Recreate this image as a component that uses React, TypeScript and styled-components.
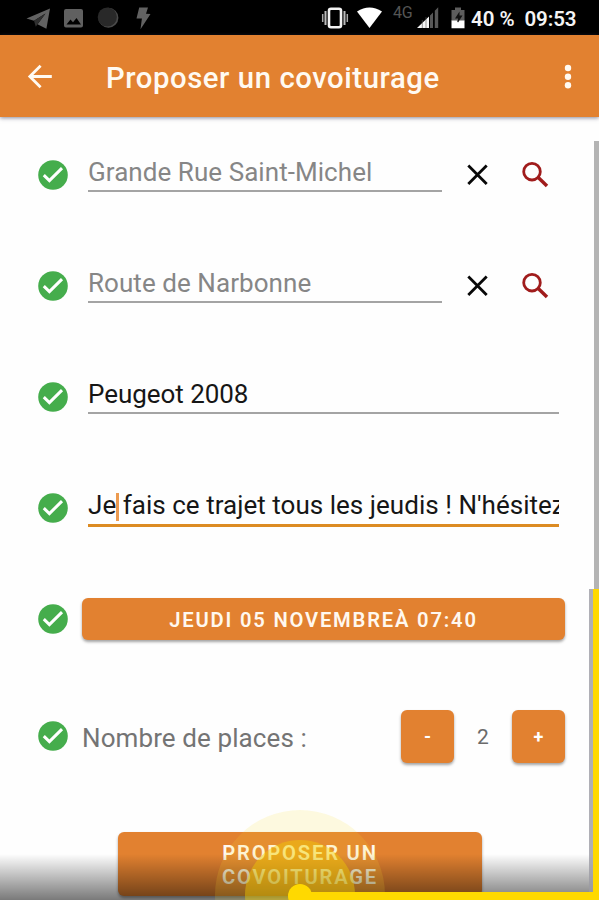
import React from "react";
import styled, { createGlobalStyle } from "styled-components";

const ORANGE = "#e28130";
const YELLOW = "#ffd900";

const GlobalStyle = createGlobalStyle`
  * { box-sizing: border-box; }
  body { margin: 0; background: #fff; font-family: Roboto, sans-serif; }
  button { border: 0; padding: 0; margin: 0; background: none; font-family: inherit; }
`;

const Screen = styled.div`
  position: relative;
  width: 599px;
  height: 900px;
  overflow: hidden;
  background: #fefefe;
  display: flex;
  flex-direction: column;
`;

const StatusBar = styled.header`
  flex: none;
  height: 35px;
  background: #000;
  color: #f4f4f4;
`;

const StatusIcons = styled.svg`
  display: block;
  width: 599px;
  height: 35px;
`;

const AppBar = styled.nav`
  flex: none;
  height: 82px;
  padding: 3px 16px 0 24px;
  display: flex;
  align-items: center;
  background: ${ORANGE};
  box-shadow: 0 1px 4px rgba(60, 60, 90, 0.6);
  z-index: 1;
`;

const Title = styled.h1`
  margin: 0 0 0 50px;
  flex: 1;
  color: #fffaf2;
  font-size: 29.3px;
  font-weight: 500;
  line-height: 36px;
  letter-spacing: 0.56px;
  white-space: nowrap;
`;

const IconButton = styled.button<{ $size: number }>`
  flex: none;
  width: ${(p) => p.$size}px;
  height: ${(p) => p.$size}px;
  svg { display: block; width: 100%; height: 100%; }
`;

const Form = styled.main`
  flex: none;
  display: flex;
  flex-direction: column;
  padding: 2px 34px 0 37px;
`;

const Row = styled.div<{ $height?: number; $gap?: number }>`
  height: ${(p) => p.$height ?? 111.2}px;
  display: flex;
  align-items: center;
  gap: ${(p) => p.$gap ?? 19}px;
`;

const CheckIcon = styled.svg`
  flex: none;
  width: 32px;
  height: 32px;
`;

const Field = styled.div<{ $width: number; $focus?: boolean; $muted?: boolean; $tracking: number }>`
  position: relative;
  flex: none;
  width: ${(p) => p.$width}px;
  height: ${(p) => (p.$focus ? 43 : 42)}px;
  margin-top: ${(p) => (p.$focus ? -5 : -7)}px;
  overflow: hidden;
  white-space: nowrap;
  font-size: 26px;
  line-height: ${(p) => (p.$focus ? 43 : 45)}px;
  letter-spacing: ${(p) => p.$tracking}px;
  color: ${(p) => (p.$muted ? "#868686" : "#161616")};
  box-shadow: inset 0 ${(p) => (p.$focus ? "-3px" : "-2px")} 0 ${(p) => (p.$focus ? "#dc8b22" : "#a4a4a4")};
`;

const Caret = styled.span`
  position: absolute;
  left: 27.5px;
  top: 9px;
  width: 3px;
  height: 28px;
  background: #ec9a50;
`;

const FieldActions = styled.div`
  display: flex;
  align-items: center;
  gap: 24px;
`;

const FilledButton = styled.button<{ $width: number; $height: number; $size?: number; $tracking?: number }>`
  flex: none;
  width: ${(p) => p.$width}px;
  height: ${(p) => p.$height}px;
  padding-top: 2px;
  border-radius: 6px;
  background: ${ORANGE};
  color: #fff8ef;
  box-shadow: 0 2px 3px rgba(0, 0, 0, 0.36);
  font-size: ${(p) => p.$size ?? 20.2}px;
  font-weight: 600;
  line-height: 24px;
  letter-spacing: ${(p) => p.$tracking ?? 1.8}px;
`;

const StepButton = styled(FilledButton)`
  font-weight: 700;
  color: #fff;
`;

const Label = styled.span`
  width: 306px;
  padding-top: 3px;
  color: #747474;
  font-size: 26px;
  line-height: 34px;
  letter-spacing: 0.1px;
  white-space: nowrap;
`;

const Count = styled.span`
  width: 32px;
  padding-top: 2px;
  text-align: center;
  color: #6b6b6b;
  font-size: 21px;
`;

const SubmitRow = styled.div`
  flex: none;
  display: flex;
  padding: 34px 0 0 118px;
`;

const ScrollThumb = styled.div`
  position: absolute;
  right: 0;
  top: 141px;
  width: 5px;
  height: 450px;
  background: #b4b4b4;
`;

const BottomShade = styled.div`
  position: absolute;
  left: 0;
  right: 0;
  bottom: 0;
  height: 46px;
  background: linear-gradient(rgba(0, 0, 0, 0), rgba(0, 0, 0, 0.52));
`;

const ProgressFrame = styled.svg`
  position: absolute;
  left: 0;
  top: 0;
  width: 599px;
  height: 900px;
  pointer-events: none;
`;

const Check = () => (
  <CheckIcon viewBox="0 0 32 32">
    <circle cx="16" cy="16" r="14.8" fill="#45ad4c" />
    <path d="M6.8 16.2l5.6 5.4L25 9.1" fill="none" stroke="#fff" strokeWidth="3" />
  </CheckIcon>
);

const CloseAndSearch = () => (
  <FieldActions>
    <IconButton $size={34} aria-label="Effacer">
      <svg viewBox="0 0 34 34">
        <path d="M7.3 7.5l18.4 18.4M25.7 7.5L7.3 25.9" stroke="#080808" strokeWidth="2.8" />
      </svg>
    </IconButton>
    <IconButton $size={34} aria-label="Rechercher">
      <svg viewBox="0 0 34 34" fill="none" stroke="#a01c1c">
        <circle cx="13" cy="13.7" r="8.3" strokeWidth="2.8" />
        <path d="M19 19.3l9 8.6" strokeWidth="3.5" />
      </svg>
    </IconButton>
  </FieldActions>
);

export default function App() {
  return (
    <Screen>
      <GlobalStyle />
      <StatusBar>
        <StatusIcons viewBox="0 0 599 35" fontFamily="Roboto, sans-serif">
          <path d="M26.5 18.4L50 8.4 46.4 28.7 37.5 24.3 45.5 13.5 34 20.8Z" fill="#626262" />
          <path d="M34 20.8L45.5 13.5 37.5 24.3 35.8 26.8Z" fill="#303030" />
          <path d="M66 9h15a2 2 0 0 1 2 2v14.5a2 2 0 0 1-2 2H66a2 2 0 0 1-2-2V11a2 2 0 0 1 2-2zM66.5 24.5H81L76.5 18 73 22.2 70.5 19.5Z" fill="#606060" fillRule="evenodd" />
          <circle cx="108.4" cy="17.8" r="10" fill="#4a4a4a" />
          <circle cx="107.3" cy="17" r="9.6" fill="#292929" />
          <path d="M139.2 7.5h8.8l-2 6.3 4.500.3-10 15.2 1.4-10.800H136.5Z" fill="#626262" />
          <g fill="none" stroke="#f2f2f2">
            <rect x="329" y="8.7" width="12" height="18.6" rx="2" strokeWidth="2.6" />
            <path d="M325.5 11v14M344.5 11v14" strokeWidth="2" stroke="#bbb" />
            <path d="M322.7 14v8M347.3 14v8" strokeWidth="1.5" stroke="#aaa" />
          </g>
          <path d="M357 11.5Q369.5 3.5 382 11.5L369.5 28Z" fill="#fff" />
          <text x="393" y="18" fontSize="16" letterSpacing="-0.3" fill="#555">4G</text>
          <path d="M417 28L429 16.5V28Z" fill="#f4f4f4" />
          <path d="M430 28V15.5L433 12.5V28ZM434.8 28V10.8L438.2 7.2V28Z" fill="#585858" />
          <path d="M422.3 20v8M426 17v11" stroke="#555" strokeWidth="0.6" />
          <path d="M451.5 10h3.5V7.5h6V10h3.5v11h-13Z" fill="#5d5d5d" />
          <path d="M459.5 11.5l-4.500 7h3v4l4.500-7h-3Z" fill="#111" />
          <path d="M451.5 20.5h5.3l1.2 2 1.5-2h5v7.7h-13Z" fill="#fff" />
          <text x="471" y="26.3" fontSize="20.5" fontWeight="600" fill="#f4f4f4" textLength="43.5">40 %</text>
          <text x="524.5" y="26.3" fontSize="20.5" fontWeight="600" fill="#f4f4f4" textLength="52">09:53</text>
        </StatusIcons>
      </StatusBar>
      <AppBar>
        <IconButton $size={32} aria-label="Retour">
          <svg viewBox="0 0 32 32" fill="none" stroke="#fffaf2" strokeWidth="2.8">
            <path d="M6 14.5h21.8M16.6 3.7L5.8 14.5l10.8 10.8" />
          </svg>
        </IconButton>
        <Title>Proposer un covoiturage</Title>
        <IconButton $size={30} aria-label="Menu">
          <svg viewBox="0 0 30 30" fill="#fffaf2">
            <circle cx="15" cy="5" r="3.2" />
            <circle cx="15" cy="13.7" r="3.2" />
            <circle cx="15" cy="22.3" r="3.2" />
          </svg>
        </IconButton>
      </AppBar>
      <Form>
        <Row>
          <Check />
          <Field $width={354} $muted $tracking={0.06}>Grande Rue Saint-Michel</Field>
          <CloseAndSearch />
        </Row>
        <Row>
          <Check />
          <Field $width={354} $muted $tracking={0.06}>Route de Narbonne</Field>
          <CloseAndSearch />
        </Row>
        <Row>
          <Check />
          <Field $width={471} $tracking={-0.05}>Peugeot 2008</Field>
        </Row>
        <Row>
          <Check />
          <Field $width={471} $focus $tracking={0.03}>
            Je fais ce trajet tous les jeudis ! N'hésitez
            <Caret />
          </Field>
        </Row>
        <Row $gap={13}>
          <Check />
          <FilledButton $width={483} $height={42}>JEUDI 05 NOVEMBREÀ 07:40</FilledButton>
        </Row>
        <Row $height={123} $gap={13}>
          <Check />
          <Label>Nombre de places :</Label>
          <StepButton $width={53} $height={53} $size={18} $tracking={0}>-</StepButton>
          <Count>2</Count>
          <StepButton $width={53} $height={53} $size={18} $tracking={0}>+</StepButton>
        </Row>
      </Form>
      <SubmitRow>
        <FilledButton $width={364} $height={64}>
          PROPOSER UN
          <br />
          COVOITURAGE
        </FilledButton>
      </SubmitRow>
      <ScrollThumb />
      <BottomShade />
      <ProgressFrame viewBox="0 0 599 900">
        <circle cx="300" cy="895" r="85" fill="#f6df30" fillOpacity="0.15" />
        <circle cx="300" cy="895" r="55" fill="#f0d000" fillOpacity="0.42" />
        <rect x="589" y="589" width="4" height="303" fill="#9b9ba4" fillOpacity="0.8" />
        <path d="M593 589h6v311H300v-8h293Z" fill={YELLOW} />
        <circle cx="300" cy="896" r="12" fill={YELLOW} />
      </ProgressFrame>
    </Screen>
  );
}
